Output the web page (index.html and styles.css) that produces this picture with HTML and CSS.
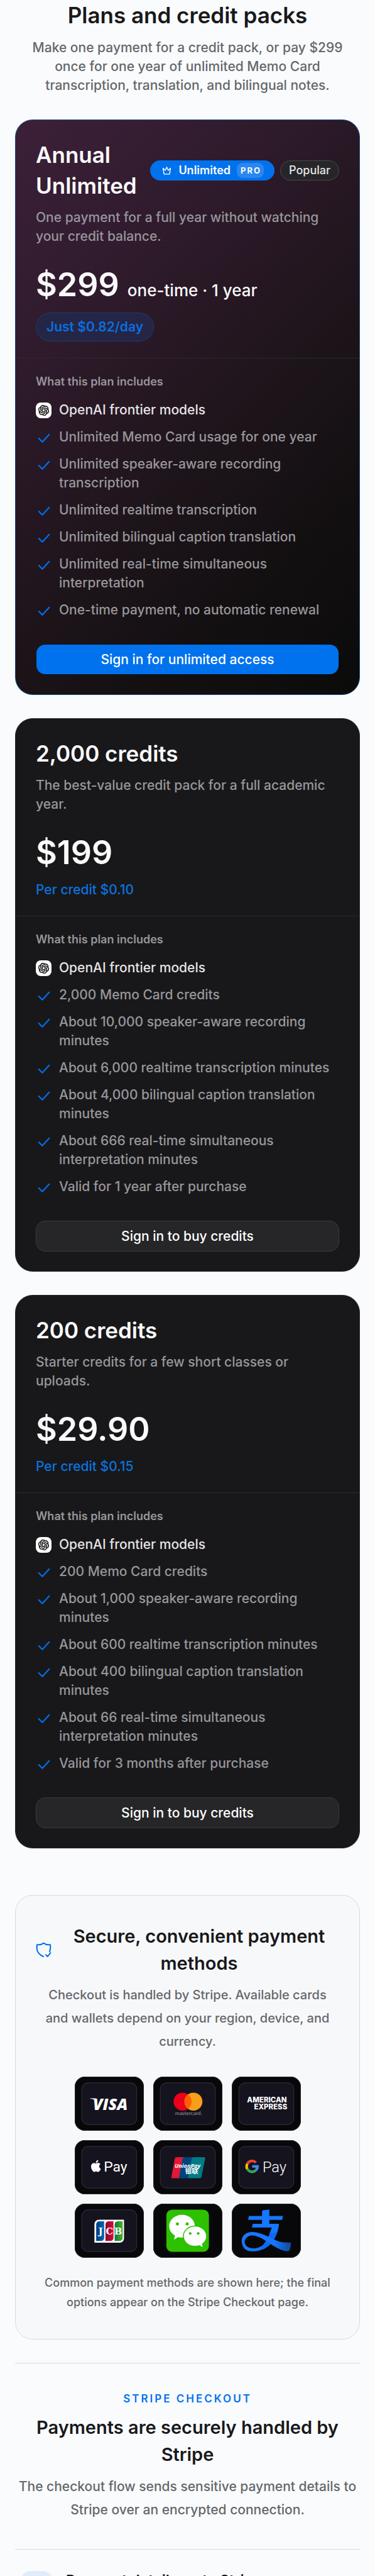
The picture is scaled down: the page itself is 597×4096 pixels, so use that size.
FILE: index.html
```html
<!DOCTYPE html>
<html lang="en">
<head>
    <meta charset="UTF-8">
    <meta name="viewport" content="width=device-width, initial-scale=1.0">
    <title>Plans and credit packs</title>
    <link rel="stylesheet" href="styles.css">
</head>
<body>
    <!-- shared icons -->
    <svg class="defs" aria-hidden="true">
        <symbol id="check" viewBox="0 0 24 24">
            <path d="M4.5 13.5l5.5 5.5L20.5 7.5" fill="none" stroke="currentColor" stroke-width="2" stroke-linecap="round" stroke-linejoin="round"/>
        </symbol>
        <symbol id="openai" viewBox="0 0 24 24">
            <path d="M22.2819 9.8211a5.9847 5.9847 0 0 0-.5157-4.9108 6.0462 6.0462 0 0 0-6.5098-2.9A6.0651 6.0651 0 0 0 4.9807 4.1818a5.9847 5.9847 0 0 0-3.9977 2.9 6.0462 6.0462 0 0 0 .7427 7.0966 5.98 5.98 0 0 0 .511 4.9107 6.051 6.051 0 0 0 6.5146 2.9001A5.9847 5.9847 0 0 0 13.2599 24a6.0557 6.0557 0 0 0 5.7718-4.2058 5.9894 5.9894 0 0 0 3.9977-2.9001 6.0557 6.0557 0 0 0-.7475-7.0729zm-9.022 12.6081a4.4755 4.4755 0 0 1-2.8764-1.0408l.1419-.0804 4.7783-2.7582a.7948.7948 0 0 0 .3927-.6813v-6.7369l2.02 1.1686a.071.071 0 0 1 .038.052v5.5826a4.504 4.504 0 0 1-4.4945 4.4944zm-9.6607-4.1254a4.4708 4.4708 0 0 1-.5346-3.0137l.142.0852 4.783 2.7582a.7712.7712 0 0 0 .7806 0l5.8428-3.3685v2.3324a.0804.0804 0 0 1-.0332.0615L9.74 19.9502a4.4992 4.4992 0 0 1-6.1408-1.6464zM2.3408 7.8956a4.485 4.485 0 0 1 2.3655-1.9728V11.6a.7664.7664 0 0 0 .3879.6765l5.8144 3.3543-2.0201 1.1685a.0757.0757 0 0 1-.071 0l-4.8303-2.7865A4.504 4.504 0 0 1 2.3408 7.872zm16.5963 3.8558L13.1038 8.364 15.1192 7.2a.0757.0757 0 0 1 .071 0l4.8303 2.7913a4.4944 4.4944 0 0 1-.6765 8.1042v-5.6772a.79.79 0 0 0-.407-.667zm2.0107-3.0231l-.142-.0852-4.7735-2.7818a.7759.7759 0 0 0-.7854 0L9.409 9.2297V6.8974a.0662.0662 0 0 1 .0284-.0615l4.8303-2.7866a4.4992 4.4992 0 0 1 6.6802 4.66zM8.3065 12.863l-2.02-1.1638a.0804.0804 0 0 1-.038-.0567V6.0742a4.4992 4.4992 0 0 1 7.3757-3.4537l-.142.0805L8.704 5.459a.7948.7948 0 0 0-.3927.6813zm1.0976-2.3654l2.602-1.4998 2.6069 1.4998v2.9994l-2.5974 1.4997-2.6067-1.4997Z" fill="#0a0a0a" stroke="#0a0a0a" stroke-width=".6"/>
        </symbol>
        <symbol id="frame" viewBox="0 0 144 112">
            <rect x="14.7" y="12.7" width="114.6" height="86.6" rx="13" fill="#15131e" stroke="#2f2d3a" stroke-width="1.5"/>
        </symbol>
    </svg>

    <main class="page">
        <header class="intro">
            <h1>Plans and credit packs</h1>
            <p>Make one payment for a credit pack, or pay $299 once for one year of unlimited Memo Card transcription, translation, and bilingual notes.</p>
        </header>

        <section class="plans">
            <article class="plan plan-featured">
                <div class="plan-top">
                    <div class="plan-title">
                        <h2>Annual Unlimited</h2>
                        <span class="badge badge-pro">
                            <svg class="crown" viewBox="0 0 24 24" aria-hidden="true"><path d="M2.5 5.5L5 20.5h14l2.500-15-5.500 5.500L12 3 8 11z" fill="none" stroke="#fff" stroke-width="2.200" stroke-linejoin="round"/></svg>
                            Unlimited
                            <small>PRO</small>
                        </span>
                        <span class="badge badge-popular">Popular</span>
                    </div>
                    <p class="plan-text">One payment for a full year without watching your credit balance.</p>
                    <p class="price">$299 <span>one-time · 1 year</span></p>
                    <p class="daily">Just $0.82/day</p>
                </div>
                <div class="plan-bottom">
                    <h3>What this plan includes</h3>
                    <ul class="features">
                        <li class="model"><i class="model-icon"><svg><use href="#openai"/></svg></i>OpenAI frontier models</li>
                        <li><svg class="check"><use href="#check"/></svg>Unlimited Memo Card usage for one year</li>
                        <li><svg class="check"><use href="#check"/></svg>Unlimited speaker-aware recording transcription</li>
                        <li><svg class="check"><use href="#check"/></svg>Unlimited realtime transcription</li>
                        <li><svg class="check"><use href="#check"/></svg>Unlimited bilingual caption translation</li>
                        <li><svg class="check"><use href="#check"/></svg>Unlimited real-time simultaneous interpretation</li>
                        <li><svg class="check"><use href="#check"/></svg>One-time payment, no automatic renewal</li>
                    </ul>
                    <button type="button" class="buy buy-primary">Sign in for unlimited access</button>
                </div>
            </article>

            <article class="plan">
                <div class="plan-top">
                    <div class="plan-title">
                        <h2>2,000 credits</h2>
                    </div>
                    <p class="plan-text">The best-value credit pack for a full academic year.</p>
                    <p class="price">$199</p>
                    <p class="per-credit">Per credit $0.10</p>
                </div>
                <div class="plan-bottom">
                    <h3>What this plan includes</h3>
                    <ul class="features">
                        <li class="model"><i class="model-icon"><svg><use href="#openai"/></svg></i>OpenAI frontier models</li>
                        <li><svg class="check"><use href="#check"/></svg>2,000 Memo Card credits</li>
                        <li><svg class="check"><use href="#check"/></svg>About 10,000 speaker-aware recording minutes</li>
                        <li><svg class="check"><use href="#check"/></svg>About 6,000 realtime transcription minutes</li>
                        <li><svg class="check"><use href="#check"/></svg>About 4,000 bilingual caption translation minutes</li>
                        <li><svg class="check"><use href="#check"/></svg>About 666 real-time simultaneous interpretation minutes</li>
                        <li><svg class="check"><use href="#check"/></svg>Valid for 1 year after purchase</li>
                    </ul>
                    <button type="button" class="buy">Sign in to buy credits</button>
                </div>
            </article>

            <article class="plan">
                <div class="plan-top">
                    <div class="plan-title">
                        <h2>200 credits</h2>
                    </div>
                    <p class="plan-text">Starter credits for a few short classes or uploads.</p>
                    <p class="price">$29.90</p>
                    <p class="per-credit">Per credit $0.15</p>
                </div>
                <div class="plan-bottom">
                    <h3>What this plan includes</h3>
                    <ul class="features">
                        <li class="model"><i class="model-icon"><svg><use href="#openai"/></svg></i>OpenAI frontier models</li>
                        <li><svg class="check"><use href="#check"/></svg>200 Memo Card credits</li>
                        <li><svg class="check"><use href="#check"/></svg>About 1,000 speaker-aware recording minutes</li>
                        <li><svg class="check"><use href="#check"/></svg>About 600 realtime transcription minutes</li>
                        <li><svg class="check"><use href="#check"/></svg>About 400 bilingual caption translation minutes</li>
                        <li><svg class="check"><use href="#check"/></svg>About 66 real-time simultaneous interpretation minutes</li>
                        <li><svg class="check"><use href="#check"/></svg>Valid for 3 months after purchase</li>
                    </ul>
                    <button type="button" class="buy">Sign in to buy credits</button>
                </div>
            </article>
        </section>

        <section class="methods">
            <div class="methods-title">
                <svg class="shield" viewBox="0 0 24 24" aria-hidden="true"><path d="M11.500 22C6 20 1.500 15 1.500 9c0-2 .2-3.500.5-5C6 4.500 9.500 3.500 12 1.500c2.500 2 6 3 10 2.500.5 2.500.7 6-.8 10.500M15.500 19.500l2.500 2.500 4.500-5.500" fill="none" stroke="currentColor" stroke-width="2" stroke-linecap="round" stroke-linejoin="round"/></svg>
                <h2>Secure, convenient payment methods</h2>
            </div>
            <p class="methods-text">Checkout is handled by Stripe. Available cards and wallets depend on your region, device, and currency.</p>

            <ul class="tiles">
                <li>
                    <svg viewBox="0 0 144 112" role="img" aria-label="Visa">
                        <use href="#frame"/>
                        <path d="M32 45h12l3 8c-3-4-8-7-15-7z" fill="#fff"/>
                        <text x="38" y="68.700" class="visa">VISA</text>
                    </svg>
                </li>
                <li>
                    <svg viewBox="0 0 144 112" role="img" aria-label="Mastercard">
                        <use href="#frame"/>
                        <circle cx="61" cy="51.700" r="18.700" fill="#eb001b"/>
                        <circle cx="83.700" cy="51.700" r="18.700" fill="#f79e1b"/>
                        <path d="M72.350 36.800a18.700 18.700 0 0 1 0 29.800a18.700 18.700 0 0 1 0-29.800" fill="#ff5f00"/>
                        <text x="73.500" y="79" class="mastercard">mastercard.</text>
                    </svg>
                </li>
                <li>
                    <svg viewBox="0 0 144 112" role="img" aria-label="American Express">
                        <use href="#frame"/>
                        <text x="114.500" y="54" class="amex">AMERICAN</text>
                        <text x="115.500" y="67.700" class="amex">EXPRESS</text>
                    </svg>
                </li>
                <li>
                    <svg viewBox="0 0 144 112" role="img" aria-label="Apple Pay">
                        <use href="#frame"/>
                        <path transform="translate(31.700 41) scale(1.035)" fill="#fff" d="M12.152 6.896c-.948 0-2.415-1.078-3.960-1.040-2.040.027-3.910 1.183-4.961 3.014-2.117 3.675-.546 9.103 1.519 12.090 1.013 1.454 2.208 3.090 3.792 3.039 1.520-.065 2.090-.987 3.935-.987 1.831 0 2.350.987 3.960.948 1.637-.026 2.676-1.480 3.676-2.948 1.156-1.688 1.636-3.325 1.662-3.415-.039-.013-3.182-1.221-3.220-4.857-.026-3.040 2.480-4.494 2.597-4.559-1.429-2.090-3.623-2.324-4.390-2.376-2-.156-3.675 1.090-4.610 1.090zM15.530 3.830c.843-1.012 1.400-2.427 1.245-3.830-1.207.052-2.662.805-3.532 1.818-.780.896-1.454 2.338-1.273 3.714 1.338.104 2.715-.688 3.559-1.701"/>
                        <text x="60.500" y="65.300" class="pay">Pay</text>
                    </svg>
                </li>
                <li>
                    <svg viewBox="0 0 144 112" role="img" aria-label="UnionPay">
                        <use href="#frame"/>
                        <path d="M48 35h18l-9 44H40c-2 0-2.600-1.500-2.200-3.500L45 38c.4-2 1.500-3 3-3z" fill="#e21836"/>
                        <path d="M67 35h20l-9 44H56c-2 0-2.600-1.500-2.200-3.500L61 38c.6-2 3-3 6-3z" fill="#00447c"/>
                        <path d="M86 35h20c2 0 2.500 1.500 2 3.500L100.500 76c-.5 2-2 3-4 3H75c-2 0-2.600-1.500-2.200-3.500L80 38c.6-2 3-3 6-3z" fill="#007b84"/>
                        <text x="44.500" y="57" class="union">UnionPay</text>
                        <text x="66" y="69.500" class="union-cn">银联</text>
                    </svg>
                </li>
                <li>
                    <svg viewBox="0 0 144 112" role="img" aria-label="Google Pay">
                        <use href="#frame"/>
                        <g fill="none" stroke-width="5.400">
                            <path d="M50.300 46.300A11.300 11.300 0 0 0 32.500 48.700" stroke="#ea4335"/>
                            <path d="M32.500 48.700A11.300 11.300 0 0 0 32.500 60" stroke="#fbbc04"/>
                            <path d="M32.500 60A11.300 11.300 0 0 0 50.300 62.300" stroke="#34a853"/>
                            <path d="M50.300 62.300A11.300 11.300 0 0 0 53.600 54.400H42.500" stroke="#4285f4"/>
                        </g>
                        <text x="64" y="66.700" class="pay pay-light">Pay</text>
                    </svg>
                </li>
                <li>
                    <svg viewBox="0 0 144 112" role="img" aria-label="JCB">
                        <defs>
                            <linearGradient id="jcb-blue"><stop stop-color="#003a7d"/><stop offset="1" stop-color="#0068b6"/></linearGradient>
                            <linearGradient id="jcb-red"><stop stop-color="#7c1330"/><stop offset="1" stop-color="#e60039"/></linearGradient>
                            <linearGradient id="jcb-green"><stop stop-color="#00803a"/><stop offset="1" stop-color="#55b02c"/></linearGradient>
                        </defs>
                        <use href="#frame"/>
                        <path d="M51 33h51.700v38c0 6-4 10-10 10H41V43c0-6 4-10 10-10z" fill="#fff"/>
                        <path d="M52 36.300h9.300V70c0 5-2.500 7.300-7.300 7.300h-9.300V44c0-5 2.500-7.700 7.300-7.700z" fill="url(#jcb-blue)"/>
                        <path d="M71.300 36.300h9.400V70c0 5-2.500 7.300-7.400 7.300H64V44c0-5 2.500-7.700 7.300-7.700z" fill="url(#jcb-red)"/>
                        <path d="M90.500 36.300h9.500V70c0 5-2.500 7.300-7.500 7.300h-9.300V44c0-5 2.500-7.700 7.300-7.700z" fill="url(#jcb-green)"/>
                        <g class="jcb">
                            <text x="54" y="63.300">J</text>
                            <text x="72.500" y="63.300">C</text>
                            <text x="90.500" y="63.300">B</text>
                        </g>
                    </svg>
                </li>
                <li>
                    <svg viewBox="0 0 144 112" role="img" aria-label="WeChat Pay">
                        <rect x="27.300" y="12" width="88.700" height="88" rx="12" fill="#2dc100"/>
                        <path d="M60 23c15 0 26.700 10.500 26.700 23.700S75 70.400 60 70.400c-3 0-5.500-.3-8.200-1.200L43.300 74.500l2-8.700C37.500 61.500 33.300 54.500 33.300 46.700 33.300 33.500 45 23 60 23z" fill="#fff"/>
                        <path d="M87 47.300c13 0 23.300 9 23.300 20.200 0 6.500-3.500 12-8.800 15.500l1.500 7-7-3.800c-3 1-6 1.300-9 1.300-13 0-23.300-9-23.300-20s10.300-20.200 23.300-20.200z" fill="#fff" stroke="#2dc100" stroke-width="4" paint-order="stroke"/>
                        <g fill="#2dc100">
                            <circle cx="50.300" cy="42" r="3.200"/>
                            <circle cx="70.700" cy="42" r="3.200"/>
                            <circle cx="77" cy="61.700" r="2.800"/>
                            <circle cx="93.700" cy="61.700" r="2.800"/>
                        </g>
                    </svg>
                </li>
                <li>
                    <svg viewBox="0 0 144 112" role="img" aria-label="Alipay">
                        <defs>
                            <linearGradient id="ali"><stop offset=".65" stop-color="#1677ff"/><stop offset="1" stop-color="#124a9a"/></linearGradient>
                        </defs>
                        <path d="M66 13.500l12-1.500v13.700h28.500l-1.500 7.300H78v8.700h20.300C97 56 93 67 87 76c-7 11-18 20-36 22.500l-9-.5C62 94 74 80 83.300 49h-41l1.500-7.300h19.500V33h-29l1.500-7.300h27.500V17c0-2 1-3.200 2.700-3.500z" fill="#0d68f5"/>
                        <path d="M66 13.500l12-1.500v13.700h28.500l-1.500 7.300H78v8.700h20.300c-.6 6-2 11-4 17.300L79 62c2-4 3.500-8 4.300-13h-41l1.500-7.300h19.500V33h-29l1.500-7.300h27.500V17c0-2 1-3.200 2.700-3.500z" fill="#1677ff"/>
                        <path d="M20.700 77C21 66 30 58.500 42 58.500c18 0 36 11.500 50 17.500 12 5 20 4.500 31.300 4.500-.3 9.500-2.300 18.200-6.300 18.200-17 0-37-16.700-51-24.700-16-9.500-26-9.500-32-6-10 6-10 18 2 23 10 4 22 0 28-4l-6 8c-8 4.500-14 4-20 3.700-11-1-17.300-10.700-17.300-21.700z" fill="url(#ali)"/>
                    </svg>
                </li>
            </ul>

            <p class="methods-note">Common payment methods are shown here; the final options appear on the Stripe Checkout page.</p>
        </section>

        <section class="checkout">
            <p class="eyebrow">Stripe Checkout</p>
            <h2>Payments are securely handled by Stripe</h2>
            <p class="checkout-text">The checkout flow sends sensitive payment details to Stripe over an encrypted connection.</p>
        </section>

        <section class="facts">
            <div class="fact">
                <span class="fact-icon"></span>
                <h3>Payment details go to Stripe</h3>
            </div>
        </section>
    </main>
</body>
</html>
```

FILE: styles.css
```css
* {
    box-sizing: border-box;
}

body {
    margin: 0;
    height: 100vh;
    overflow: hidden;
    background-color: #fafbfd;
    color: #18191b;
    font-family: Inter, "Liberation Sans", sans-serif;
    font-size: 21px;
    font-weight: 500;
    line-height: 30px;
}

h1, h2, h3, p, ul {
    margin: 0;
    padding: 0;
}

ul {
    list-style: none;
}

.defs {
    display: none;
}

.page {
    padding: 0 24px;
}

h1, .plan h2 {
    font-size: 35px;
    font-weight: 600;
    line-height: 49px;
}

/* Intro */
.intro {
    display: flex;
    flex-direction: column;
    gap: 12px;
    text-align: center;
}

.intro p {
    padding: 0 16px;
    color: #65676b;
}

/* Plan cards */
.plans {
    display: flex;
    flex-direction: column;
    gap: 37px;
    margin-top: 39px;
}

.plan {
    background-color: #18181a;
    border: 1px solid #262629;
    border-radius: 28px;
    color: #fafafa;
}

.plan-featured {
    background: linear-gradient(135deg, #3c2039 0%, #301b2d 26%, #1d141a 58%, #141012 75%, #0b0b0a 100%);
    border-color: #134a8c;
}

.plan-top {
    padding: 31px 32px 26px;
    border-bottom: 1px solid #29292c;
}

.plan-bottom {
    padding: 25px 32px 31px;
}

.plan-title {
    display: flex;
    align-items: center;
    gap: 9px;
}

.plan-title h2 {
    flex: 1;
}

.badge {
    display: flex;
    align-items: center;
    height: 32px;
    border-radius: 16px;
    font-size: 18px;
}

.badge-pro {
    gap: 10px;
    padding: 0 17px 0 18px;
    background-color: #0072ee;
    color: #fff;
    font-weight: 600;
}

.badge-pro small {
    padding: 0 4px 0 6px;
    border-radius: 9px;
    background-color: #2b87ef;
    font-size: 13px;
    font-weight: 700;
    letter-spacing: 2px;
    line-height: 24px;
}

.crown {
    width: 17px;
    height: 15px;
}

.badge-popular {
    padding: 0 13px;
    border: 1px solid #48464c;
    background-color: #262629;
    color: #e4e4e6;
}

.plan-text {
    margin-top: 11px;
    color: #98969b;
}

.price {
    margin-top: 31px;
    font-size: 52px;
    font-weight: 600;
    line-height: 62px;
}

.price span {
    font-size: 26px;
    font-weight: 500;
    line-height: 30px;
}

.daily {
    width: fit-content;
    margin-top: 13px;
    padding: 7px 16px;
    border: 1px solid #1c3c70;
    border-radius: 23px;
    background-color: #252545;
    color: #0a6fe0;
    font-weight: 600;
}

.per-credit {
    margin-top: 13px;
    color: #0a73e0;
}

.plan h3 {
    color: #98969b;
    font-size: 18px;
    font-weight: 600;
    line-height: 24px;
}

.features {
    display: flex;
    flex-direction: column;
    gap: 13px;
    margin-top: 18px;
    color: #98969b;
}

.features li {
    display: flex;
    gap: 12px;
}

.features .model {
    color: #e6e3e7;
}

.model-icon {
    display: flex;
    flex: none;
    align-items: center;
    justify-content: center;
    width: 25px;
    height: 25px;
    margin-top: 3px;
    border-radius: 8px;
    background-color: #fff;
}

.model-icon svg {
    width: 17px;
    height: 17px;
}

.check {
    flex: none;
    width: 25px;
    height: 25px;
    margin-top: 3px;
    color: #0072ee;
}

.buy {
    display: block;
    width: 100%;
    height: 49px;
    margin-top: 39px;
    border: 1px solid #3a3a3d;
    border-radius: 15px;
    background-color: #262628;
    color: #fff;
    font: inherit;
    cursor: pointer;
}

.buy:hover {
    background-color: #303033;
}

.buy-primary, .buy-primary:hover {
    border-color: transparent;
    background-color: #0072ee;
    background-clip: padding-box;
}

/* Payment methods */
.methods {
    margin-top: 74px;
    padding: 43px 32px;
    border: 1px solid #d9dadd;
    border-radius: 28px;
    background-color: #f7f8fa;
    text-align: center;
}

.methods h2, .checkout h2 {
    font-size: 29px;
    font-weight: 600;
    line-height: 43px;
}

.methods-title {
    display: flex;
    align-items: center;
    gap: 12px;
}

.methods-title h2 {
    flex: 1;
}

.shield {
    width: 25px;
    height: 25px;
    color: #0072ee;
}

.methods-text, .checkout-text {
    margin-top: 11px;
    color: #65676b;
    line-height: 37px;
}

.methods-text {
    font-size: 20px;
}

.tiles {
    display: grid;
    grid-template-columns: repeat(3, 110px);
    justify-content: center;
    gap: 15px;
    margin-top: 37px;
}

.tiles li {
    height: 86px;
    border-radius: 16px;
    background-color: #08080a;
    box-shadow: inset 0 0 0 1px #262629;
}

.tiles svg {
    display: block;
    width: 100%;
    height: 100%;
}

.visa {
    fill: #fff;
    font: italic 800 33px "Open Sans", sans-serif;
}

.mastercard {
    fill: #9c9aa2;
    font: 11px Lato, sans-serif;
    text-anchor: middle;
}

.amex {
    fill: #fff;
    font: 800 15px Inter, sans-serif;
    text-anchor: end;
}

.pay {
    fill: #fff;
    font: 30px Roboto, sans-serif;
}

.pay-light {
    font-weight: 300;
    font-size: 31px;
}

.union {
    fill: #fff;
    font: italic 700 12px "Open Sans", sans-serif;
}

.union-cn {
    fill: #fff;
    font: 700 14px "Noto Sans CJK SC", sans-serif;
}

.jcb {
    fill: #fff;
    font: 700 19px "DejaVu Serif", serif;
    text-anchor: middle;
}

.methods-note {
    margin-top: 24px;
    color: #65676b;
    font-size: 18px;
    line-height: 31px;
}

/* Stripe checkout */
.checkout {
    margin-top: 37px;
    padding: 41px 0 44px;
    border-top: 1px solid #d9dadd;
    text-align: center;
}

.eyebrow {
    color: #0072ee;
    font-size: 17px;
    font-weight: 600;
    letter-spacing: 3px;
    text-transform: uppercase;
}

.checkout h2 {
    margin-top: 9px;
}

.facts {
    padding: 34px 8px;
    border-top: 1px solid #d9dadd;
}

.fact {
    display: flex;
    gap: 20px;
}

.fact-icon {
    width: 53px;
    height: 53px;
    border-radius: 18px;
    background-color: #e0ecf9;
}

.fact h3 {
    font-size: 23px;
    font-weight: 600;
}
```
